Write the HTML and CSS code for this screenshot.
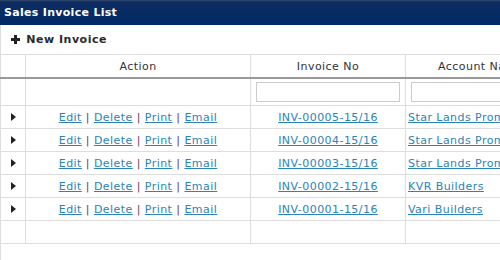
FILE: index.html
```html
<!DOCTYPE html>
<html lang="en">
<head>
  <meta charset="UTF-8">
  <title>Sales Invoice List</title>
  <link rel="stylesheet" href="styles.css">
</head>
<body>

<div class="panel">
  <div class="panel-title">Sales Invoice List</div>

  <div class="toolbar">
    <a class="new-btn" href="#">
      <svg class="plus" width="9" height="9" viewBox="0 0 9 9"><path d="M3 0h3v3h3v3H6v3H3V6H0V3h3z" fill="#222"/></svg>
      New Invoice
    </a>
  </div>

  <table class="grid">
    <colgroup>
      <col class="c-expand">
      <col class="c-action">
      <col class="c-invoice">
      <col class="c-account">
    </colgroup>
    <thead>
      <tr class="head-row">
        <th></th>
        <th>Action</th>
        <th>Invoice No</th>
        <th class="left">Account Name</th>
      </tr>
      <tr class="filter-row">
        <td></td>
        <td></td>
        <td><input type="text" class="filter"></td>
        <td><input type="text" class="filter"></td>
      </tr>
    </thead>
    <tbody>
      <tr>
        <td><span class="arrow"></span></td>
        <td class="actions"><a href="#">Edit</a> | <a href="#">Delete</a> | <a href="#">Print</a> | <a href="#">Email</a></td>
        <td class="center"><a href="#">INV-00005-15/16</a></td>
        <td><a href="#">Star Lands Promoters</a></td>
      </tr>
      <tr>
        <td><span class="arrow"></span></td>
        <td class="actions"><a href="#">Edit</a> | <a href="#">Delete</a> | <a href="#">Print</a> | <a href="#">Email</a></td>
        <td class="center"><a href="#">INV-00004-15/16</a></td>
        <td><a href="#">Star Lands Promoters</a></td>
      </tr>
      <tr>
        <td><span class="arrow"></span></td>
        <td class="actions"><a href="#">Edit</a> | <a href="#">Delete</a> | <a href="#">Print</a> | <a href="#">Email</a></td>
        <td class="center"><a href="#">INV-00003-15/16</a></td>
        <td><a href="#">Star Lands Promoters</a></td>
      </tr>
      <tr>
        <td><span class="arrow"></span></td>
        <td class="actions"><a href="#">Edit</a> | <a href="#">Delete</a> | <a href="#">Print</a> | <a href="#">Email</a></td>
        <td class="center"><a href="#">INV-00002-15/16</a></td>
        <td><a href="#">KVR Builders</a></td>
      </tr>
      <tr>
        <td><span class="arrow"></span></td>
        <td class="actions"><a href="#">Edit</a> | <a href="#">Delete</a> | <a href="#">Print</a> | <a href="#">Email</a></td>
        <td class="center"><a href="#">INV-00001-15/16</a></td>
        <td><a href="#">Vari Builders</a></td>
      </tr>
      <tr class="empty-row">
        <td></td>
        <td></td>
        <td></td>
        <td></td>
      </tr>
    </tbody>
  </table>
</div>

</body>
</html>
```

FILE: styles.css
```css
html, body {
  margin: 0;
  padding: 0;
  background: #fff;
  overflow: hidden;
}
body {
  font-family: "DejaVu Sans", Verdana, sans-serif;
  font-size: 11px;
  letter-spacing: 0.45px;
  color: #333;
}
.panel {
  width: 600px;
  height: 260px;
  border-left: 1px solid #ddd;
}
.panel-title {
  height: 25px;
  line-height: 26px;
  padding-left: 4px;
  background: linear-gradient(#33496f 0, #0d2c60 2px, #002a66 100%);
  color: #fff;
  font-weight: bold;
  font-size: 11px;
  letter-spacing: 0.3px;
  margin-left: -1px;
}
.toolbar {
  height: 29px;
  line-height: 30px;
  padding-left: 10px;
}
.new-btn {
  color: #2a2a2a;
  font-weight: bold;
  font-size: 11px;
  letter-spacing: 0.5px;
  text-decoration: none;
}
.plus {
  margin-right: 2px;
  vertical-align: -1px;
}
.grid {
  border-collapse: collapse;
  table-layout: fixed;
  width: 600px;
  margin-left: -1px;
}
.c-expand { width: 25px; }
.c-action { width: 225px; }
.c-invoice { width: 155px; }
.c-account { width: 195px; }
.grid th,
.grid td {
  border: 1px solid #ddd;
  padding: 0 2px;
  height: 22px;
  white-space: nowrap;
  overflow: hidden;
}
.grid th {
  font-weight: normal;
  text-align: center;
  border-bottom: 2px solid #999;
}
.grid th.left {
  text-align: left;
  padding-left: 32px;
}
.filter-row td {
  height: 26px;
  padding: 0 5px;
}
.filter {
  display: block;
  width: 100%;
  box-sizing: border-box;
  height: 20px;
  border: 1px solid #ccc;
  margin: 0;
}
.grid a {
  color: #2b84b3;
}
.actions {
  text-align: center;
  color: #6b3a5e;
}
.center {
  text-align: center;
}
.arrow {
  display: block;
  margin-left: 8px;
  width: 0;
  height: 0;
  border-top: 4px solid transparent;
  border-bottom: 4px solid transparent;
  border-left: 5px solid #222;
}
.grid tr.empty-row td {
  height: 22px;
}
```
